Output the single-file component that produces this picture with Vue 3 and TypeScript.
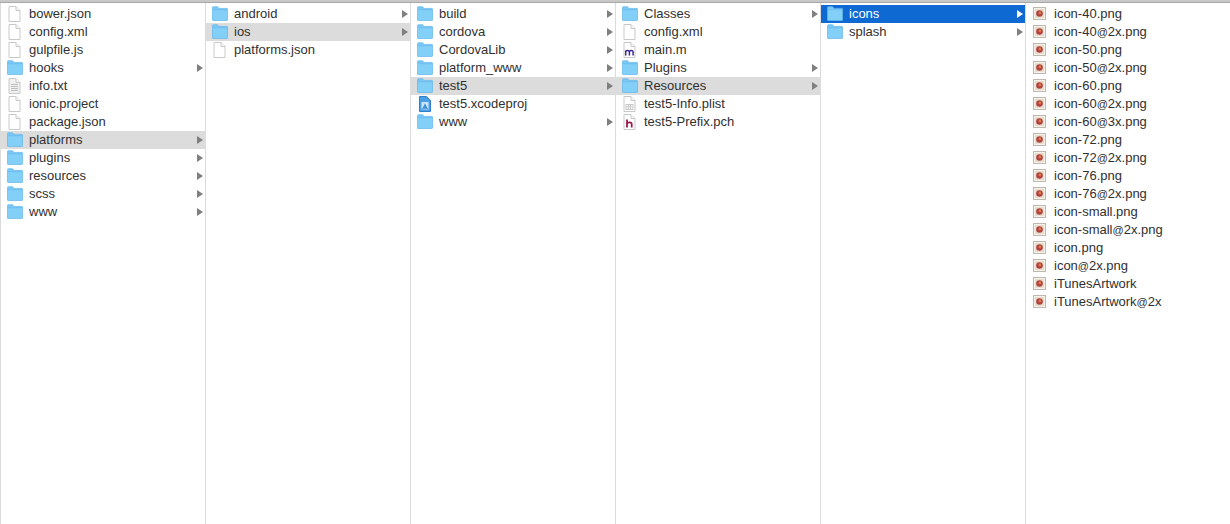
<script setup lang="ts">
type Kind = 'file' | 'text' | 'folder' | 'xcode' | 'plist' | 'm' | 'h' | 'png';
interface Row { name: string; kind: Kind; state?: 'open' | 'active' }
const f = (name: string, state?: 'open' | 'active'): Row => ({ name, kind: 'folder', state });
const k = (kind: Kind) => (name: string): Row => ({ name, kind });
const file = k('file');
const png = k('png');
const columns: Row[][] = [
  [file('bower.json'), file('config.xml'), file('gulpfile.js'), f('hooks'), k('text')('info.txt'), file('ionic.project'), file('package.json'), f('platforms', 'open'), f('plugins'), f('resources'), f('scss'), f('www')],
  [f('android'), f('ios', 'open'), file('platforms.json')],
  [f('build'), f('cordova'), f('CordovaLib'), f('platform_www'), f('test5', 'open'), k('xcode')('test5.xcodeproj'), f('www')],
  [f('Classes'), file('config.xml'), k('m')('main.m'), f('Plugins'), f('Resources', 'open'), k('plist')('test5-Info.plist'), k('h')('test5-Prefix.pch')],
  [f('icons', 'active'), f('splash')],
  ['icon-40.png', 'icon-40@2x.png', 'icon-50.png', 'icon-50@2x.png', 'icon-60.png', 'icon-60@2x.png', 'icon-60@3x.png', 'icon-72.png', 'icon-72@2x.png', 'icon-76.png', 'icon-76@2x.png', 'icon-small.png', 'icon-small@2x.png', 'icon.png', 'icon@2x.png', 'iTunesArtwork', 'iTunesArtwork@2x'].map(png),
];
</script>

<template>
  <div class="finder">
    <div class="topbar"></div>
    <div class="columns">
      <ul v-for="(col, i) in columns" :key="i" class="column">
        <li v-for="row in col" :key="row.name" class="row" :class="row.state">
          <svg class="icon" width="16" height="16" viewBox="0 0 16 16">
            <template v-if="row.kind === 'folder'">
              <path d="M.5 14V1.4C.5 1 .8 .7 1.2 .7H5.6L7 2.4H15C15.3 2.4 15.5 2.6 15.5 3V14C15.5 14.3 15.3 14.5 15 14.5H1C.7 14.5 .5 14.3 .5 14Z" fill="#79c8f5" stroke="#64b8ec" stroke-width=".7" />
              <path d="M1 4H15V14H1Z" fill="#82cff8" />
              <path d="M1 3.7H15" stroke="#68bbee" stroke-width=".6" />
            </template>
            <template v-else-if="row.kind === 'png'">
              <rect x="1.5" y="1.5" width="12" height="12" fill="#f4f1eb" stroke="#bdb9b1" />
              <rect x="3" y="3" width="9" height="9" fill="#e6dccb" />
              <circle cx="7.5" cy="7.5" r="3.3" fill="#b5413f" />
              <circle cx="7.9" cy="6.9" r="1.3" fill="#d7824c" />
            </template>
            <template v-else-if="row.kind === 'xcode'">
              <path d="M2.5 .5H9.5L13.5 4.5V15.5H2.5Z" fill="#4b9fe6" stroke="#2f7fcf" />
              <path d="M4.5 6H11.5V13.5H4.5Z" fill="#cfe6fa" />
              <path d="M5.6 12L8 7.2L10.4 12Z" fill="#3f90dc" />
              <path d="M5 12.7H11" stroke="#3f90dc" />
            </template>
            <template v-else>
              <path d="M2 .5H9L13 4.5V15.5H2Z" :fill="row.kind === 'text' ? '#f0f0f0' : '#fff'" stroke="#c9c9c9" />
              <path d="M9 .5V4.5H13" fill="#f6f6f6" stroke="#c9c9c9" />
              <path v-if="row.kind === 'text'" d="M4 6.5H11M4 8.5H11M4 10.5H11M4 12.5H11" stroke="#bdbdbd" />
              <g v-if="row.kind === 'plist'" fill="none" stroke="#cacaca">
                <rect x="4" y="8.5" width="7" height="5" />
                <path d="M4 10.8H11M6.3 8.5V13.5M8.6 8.5V13.5" />
              </g>
              <path v-if="row.kind === 'm'" d="M3.7 13.5V8.4M3.7 9.5C4.3 8.2 6.9 8 7.4 9.7V13.5M7.4 9.5C8.1 8.1 10.8 8 11.1 9.7V13.5" fill="none" stroke="#3f2a8f" stroke-width="1.5" />
              <path v-if="row.kind === 'h'" d="M5 5.5V13.5M5 9.8C5.7 8 9.5 7.8 9.7 10V13.5" fill="none" stroke="#9c1c4a" stroke-width="1.8" />
            </template>
          </svg>
          <span class="label">
            <template v-for="(part, p) in row.name.split('@')" :key="p"><span v-if="p > 0" class="at">@</span>{{ part }}</template>
          </span>
          <span v-if="row.kind === 'folder'" class="arrow"></span>
        </li>
      </ul>
    </div>
  </div>
</template>

<style>
html, body { margin: 0; background: #fff; }
</style>

<style scoped>
.finder {
  width: 1230px;
  height: 524px;
  display: flex;
  flex-direction: column;
  background: #fff;
  overflow: hidden;
  font: 13px/18px "Liberation Sans", Arial, sans-serif;
  color: #303030;
}
.topbar {
  flex: none;
  box-sizing: border-box;
  height: 3px;
  background: #c8c8c8;
  border-bottom: 1px solid #a8a8a8;
}
.columns {
  flex: 1;
  display: flex;
  border-left: 1px solid #dcdcdc;
}
.column {
  flex: 0 0 205px;
  box-sizing: border-box;
  margin: 0;
  padding: 2px 0 0;
  list-style: none;
  border-right: 1px solid #dcdcdc;
}
.column:last-child { flex: 1; border-right: 0; }
.row {
  height: 18px;
  display: flex;
  align-items: center;
  padding: 0 2px 0 6px;
}
.row.open { background: #dcdcdc; }
.row.active { background: #0f69d2; color: #fff; }
.icon { flex: none; margin-right: 6px; }
.label { flex: 1; white-space: nowrap; }
.at { font-size: 11px; }
.arrow {
  width: 0;
  height: 0;
  border-left: 6px solid #7f7f7f;
  border-top: 4px solid transparent;
  border-bottom: 4px solid transparent;
}
.active .arrow { border-left-color: #fff; }
</style>
